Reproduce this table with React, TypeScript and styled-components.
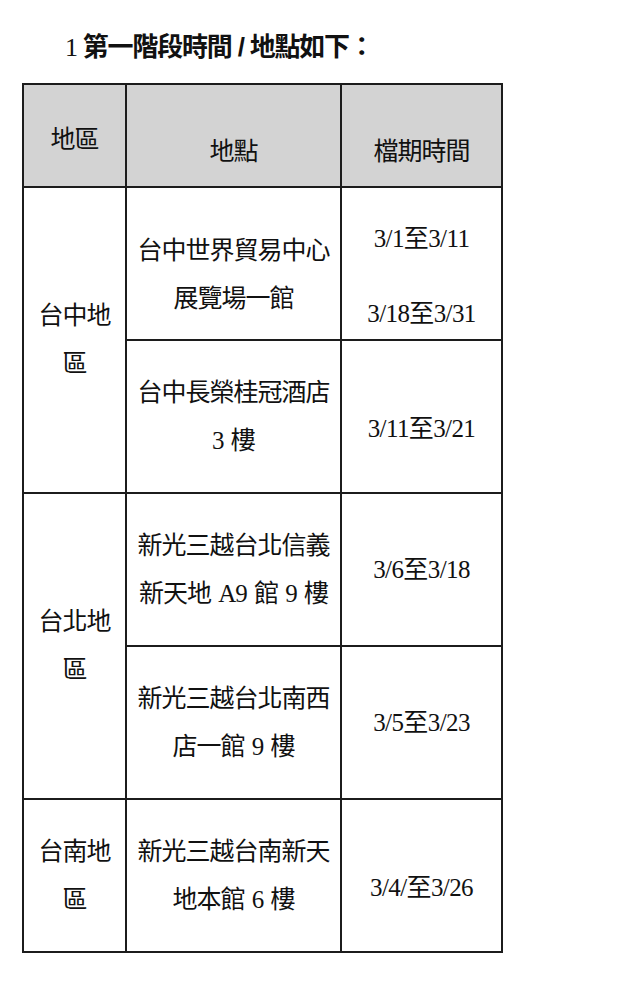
import styled, { createGlobalStyle } from "styled-components";

const GlobalStyle = createGlobalStyle`
  html, body {
    margin: 0;
    padding: 0;
    background: #ffffff;
  }
  body {
    font-family: "Liberation Serif", "Noto Sans CJK TC", serif;
    color: #111111;
  }
`;

const Page = styled.div`
  width: 644px;
  min-height: 1000px;
  padding: 31px 0 0 22px;
  box-sizing: border-box;
`;

const Title = styled.h2`
  margin: 0 0 0 43px;
  height: 52px;
  font-size: 26px;
  line-height: 32px;
  font-weight: 700;
  letter-spacing: -1.2px;
  font-family: "Liberation Serif", "Noto Sans CJK TC", serif;
`;

const Num = styled.span`
  font-weight: 400;
  margin-right: 6px;
`;

const Slash = styled.span`
  font-family: "Liberation Sans", "Noto Sans CJK TC", sans-serif;
  margin: 0 6px;
`;

const Table = styled.table`
  border-collapse: collapse;
  table-layout: fixed;
  width: 479px;
  font-size: 25px;
  line-height: 48px;
  text-align: center;
  letter-spacing: -1px;

  td,
  th {
    border: 2px solid #1c1c1c;
    padding: 0;
  }
`;

const HeadRow = styled.tr`
  height: 103px;
`;

const BodyRow = styled.tr`
  height: 153px;
`;

const HeadCell = styled.th<{ $drop?: number }>`
  background: #d3d3d3;
  font-weight: 400;
  vertical-align: top;
  padding-top: ${({ $drop }) => $drop ?? 43}px !important;
  box-sizing: border-box;
`;

const RegionCell = styled.td`
  vertical-align: middle;
  padding: 0 12px !important;
`;

const PlaceCell = styled.td<{ $shift?: number }>`
  vertical-align: middle;
  word-spacing: 2px;
  padding-top: ${({ $shift }) => $shift ?? 0}px !important;
`;

const DateCell = styled.td<{ $shift?: number }>`
  vertical-align: middle;
  letter-spacing: -0.6px;
  padding-top: ${({ $shift }) => $shift ?? 0}px !important;
`;

const DateList = styled.div`
  display: flex;
  flex-direction: column;
  gap: 27px;
`;

type Place = { lines: string[]; dates: string[]; placeShift?: number; dateShift?: number };
type Region = { name: string; places: Place[] };

const regions: Region[] = [
  {
    name: "台中地區",
    places: [
      {
        lines: ["台中世界貿易中心", "展覽場一館"],
        dates: ["3/1至3/11", "3/18至3/31"],
        placeShift: 22,
        dateShift: 26,
      },
      { lines: ["台中長榮桂冠酒店", "3 樓"], dates: ["3/11至3/21"], dateShift: 24 },
    ],
  },
  {
    name: "台北地區",
    places: [
      { lines: ["新光三越台北信義", "新天地 A9 館 9 樓"], dates: ["3/6至3/18"] },
      { lines: ["新光三越台北南西", "店一館 9 樓"], dates: ["3/5至3/23"] },
    ],
  },
  {
    name: "台南地區",
    places: [{ lines: ["新光三越台南新天", "地本館 6 樓"], dates: ["3/4/至3/26"], dateShift: 24 }],
  },
];

export default function App() {
  return (
    <Page>
      <GlobalStyle />
      <Title>
        <Num>1</Num>第一階段時間<Slash>/</Slash>地點如下：
      </Title>
      <Table>
        <colgroup>
          <col style={{ width: 103 }} />
          <col style={{ width: 215 }} />
          <col style={{ width: 161 }} />
        </colgroup>
        <thead>
          <HeadRow>
            <HeadCell $drop={31}>地區</HeadCell>
            <HeadCell>地點</HeadCell>
            <HeadCell>檔期時間</HeadCell>
          </HeadRow>
        </thead>
        <tbody>
          {regions.flatMap((region) =>
            region.places.map((place, i) => (
              <BodyRow key={region.name + i}>
                {i === 0 && (
                  <RegionCell rowSpan={region.places.length}>{region.name}</RegionCell>
                )}
                <PlaceCell $shift={place.placeShift}>
                  {place.lines.map((l) => (
                    <div key={l}>{l}</div>
                  ))}
                </PlaceCell>
                <DateCell $shift={place.dateShift}>
                  <DateList>
                    {place.dates.map((d) => (
                      <div key={d}>{d}</div>
                    ))}
                  </DateList>
                </DateCell>
              </BodyRow>
            ))
          )}
        </tbody>
      </Table>
    </Page>
  );
}
